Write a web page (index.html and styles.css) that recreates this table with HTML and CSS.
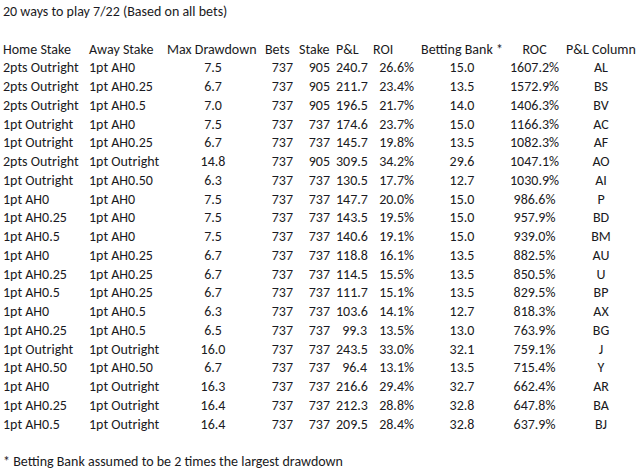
FILE: index.html
```html
<!DOCTYPE html>
<html>
<head>
<meta charset="utf-8">
<link rel="stylesheet" href="styles.css">
</head>
<body>
<div class="sheet">
  <div class="line title">20 ways to play 7/22 (Based on all bets)</div>
  <div class="line blank"></div>
  <div class="row head">
    <div class="l">Home Stake</div><div class="l">Away Stake</div><div class="l">Max Drawdown</div><div class="l">Bets</div><div class="l">Stake</div><div class="l">P&amp;L</div><div class="l">ROI</div><div class="c">Betting Bank *</div><div class="c">ROC</div><div class="c">P&amp;L Column</div>
  </div>
  <div class="row"><div class="l">2pts Outright</div><div class="l">1pt AH0</div><div class="c">7.5</div><div class="r">737</div><div class="r">905</div><div class="r">240.7</div><div class="r">26.6%</div><div class="c">15.0</div><div class="c">1607.2%</div><div class="c">AL</div></div>
  <div class="row"><div class="l">2pts Outright</div><div class="l">1pt AH0.25</div><div class="c">6.7</div><div class="r">737</div><div class="r">905</div><div class="r">211.7</div><div class="r">23.4%</div><div class="c">13.5</div><div class="c">1572.9%</div><div class="c">BS</div></div>
  <div class="row"><div class="l">2pts Outright</div><div class="l">1pt AH0.5</div><div class="c">7.0</div><div class="r">737</div><div class="r">905</div><div class="r">196.5</div><div class="r">21.7%</div><div class="c">14.0</div><div class="c">1406.3%</div><div class="c">BV</div></div>
  <div class="row"><div class="l">1pt Outright</div><div class="l">1pt AH0</div><div class="c">7.5</div><div class="r">737</div><div class="r">737</div><div class="r">174.6</div><div class="r">23.7%</div><div class="c">15.0</div><div class="c">1166.3%</div><div class="c">AC</div></div>
  <div class="row"><div class="l">1pt Outright</div><div class="l">1pt AH0.25</div><div class="c">6.7</div><div class="r">737</div><div class="r">737</div><div class="r">145.7</div><div class="r">19.8%</div><div class="c">13.5</div><div class="c">1082.3%</div><div class="c">AF</div></div>
  <div class="row"><div class="l">2pts Outright</div><div class="l">1pt Outright</div><div class="c">14.8</div><div class="r">737</div><div class="r">905</div><div class="r">309.5</div><div class="r">34.2%</div><div class="c">29.6</div><div class="c">1047.1%</div><div class="c">AO</div></div>
  <div class="row"><div class="l">1pt Outright</div><div class="l">1pt AH0.50</div><div class="c">6.3</div><div class="r">737</div><div class="r">737</div><div class="r">130.5</div><div class="r">17.7%</div><div class="c">12.7</div><div class="c">1030.9%</div><div class="c">AI</div></div>
  <div class="row"><div class="l">1pt AH0</div><div class="l">1pt AH0</div><div class="c">7.5</div><div class="r">737</div><div class="r">737</div><div class="r">147.7</div><div class="r">20.0%</div><div class="c">15.0</div><div class="c">986.6%</div><div class="c">P</div></div>
  <div class="row"><div class="l">1pt AH0.25</div><div class="l">1pt AH0</div><div class="c">7.5</div><div class="r">737</div><div class="r">737</div><div class="r">143.5</div><div class="r">19.5%</div><div class="c">15.0</div><div class="c">957.9%</div><div class="c">BD</div></div>
  <div class="row"><div class="l">1pt AH0.5</div><div class="l">1pt AH0</div><div class="c">7.5</div><div class="r">737</div><div class="r">737</div><div class="r">140.6</div><div class="r">19.1%</div><div class="c">15.0</div><div class="c">939.0%</div><div class="c">BM</div></div>
  <div class="row"><div class="l">1pt AH0</div><div class="l">1pt AH0.25</div><div class="c">6.7</div><div class="r">737</div><div class="r">737</div><div class="r">118.8</div><div class="r">16.1%</div><div class="c">13.5</div><div class="c">882.5%</div><div class="c">AU</div></div>
  <div class="row"><div class="l">1pt AH0.25</div><div class="l">1pt AH0.25</div><div class="c">6.7</div><div class="r">737</div><div class="r">737</div><div class="r">114.5</div><div class="r">15.5%</div><div class="c">13.5</div><div class="c">850.5%</div><div class="c">U</div></div>
  <div class="row"><div class="l">1pt AH0.5</div><div class="l">1pt AH0.25</div><div class="c">6.7</div><div class="r">737</div><div class="r">737</div><div class="r">111.7</div><div class="r">15.1%</div><div class="c">13.5</div><div class="c">829.5%</div><div class="c">BP</div></div>
  <div class="row"><div class="l">1pt AH0</div><div class="l">1pt AH0.5</div><div class="c">6.3</div><div class="r">737</div><div class="r">737</div><div class="r">103.6</div><div class="r">14.1%</div><div class="c">12.7</div><div class="c">818.3%</div><div class="c">AX</div></div>
  <div class="row"><div class="l">1pt AH0.25</div><div class="l">1pt AH0.5</div><div class="c">6.5</div><div class="r">737</div><div class="r">737</div><div class="r">99.3</div><div class="r">13.5%</div><div class="c">13.0</div><div class="c">763.9%</div><div class="c">BG</div></div>
  <div class="row"><div class="l">1pt Outright</div><div class="l">1pt Outright</div><div class="c">16.0</div><div class="r">737</div><div class="r">737</div><div class="r">243.5</div><div class="r">33.0%</div><div class="c">32.1</div><div class="c">759.1%</div><div class="c">J</div></div>
  <div class="row"><div class="l">1pt AH0.50</div><div class="l">1pt AH0.50</div><div class="c">6.7</div><div class="r">737</div><div class="r">737</div><div class="r">96.4</div><div class="r">13.1%</div><div class="c">13.5</div><div class="c">715.4%</div><div class="c">Y</div></div>
  <div class="row"><div class="l">1pt AH0</div><div class="l">1pt Outright</div><div class="c">16.3</div><div class="r">737</div><div class="r">737</div><div class="r">216.6</div><div class="r">29.4%</div><div class="c">32.7</div><div class="c">662.4%</div><div class="c">AR</div></div>
  <div class="row"><div class="l">1pt AH0.25</div><div class="l">1pt Outright</div><div class="c">16.4</div><div class="r">737</div><div class="r">737</div><div class="r">212.3</div><div class="r">28.8%</div><div class="c">32.8</div><div class="c">647.8%</div><div class="c">BA</div></div>
  <div class="row"><div class="l">1pt AH0.5</div><div class="l">1pt Outright</div><div class="c">16.4</div><div class="r">737</div><div class="r">737</div><div class="r">209.5</div><div class="r">28.4%</div><div class="c">32.8</div><div class="c">637.9%</div><div class="c">BJ</div></div>
  <div class="line blank"></div>
  <div class="line note">* Betting Bank assumed to be 2 times the largest drawdown</div>
</div>
</body>
</html>
```
FILE: styles.css
```css
html, body {
  margin: 0;
  padding: 0;
  background: #ffffff;
}
.sheet {
  width: 640px;
  padding-top: 3px;
  font-family: Carlito, Calibri, Lato, "Liberation Sans", sans-serif;
  font-size: 14px;
  color: #1a1a22;
}
.line {
  height: 18.75px;
  line-height: 18.75px;
  padding-left: 3px;
  white-space: nowrap;
}
.row {
  display: grid;
  grid-template-columns: 86px 78px 98px 34px 37px 37px 47px 90px 55px 78px;
  height: 18.75px;
  line-height: 18.75px;
  white-space: nowrap;
}
.row > div {
  padding: 0 3px;
  overflow: visible;
}
.row .l { text-align: left; }
.row .r { text-align: right; }
.row .c { text-align: center; }
```
